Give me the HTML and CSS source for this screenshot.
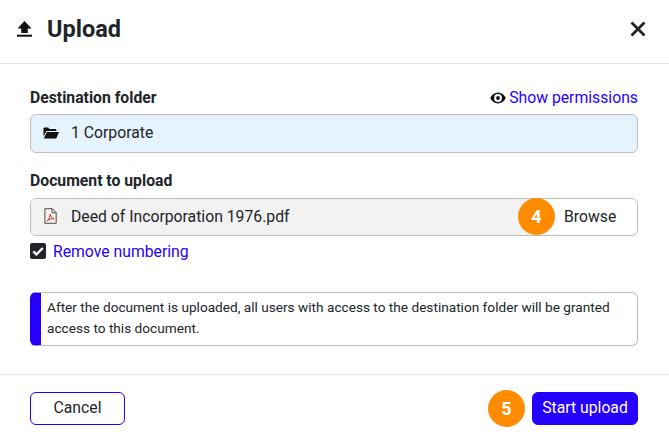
FILE: index.html
```html
<!DOCTYPE html>
<html lang="en">
<head>
    <meta charset="UTF-8">
    <meta name="viewport" content="width=device-width, initial-scale=1.0">
    <title>Upload</title>
    <link rel="stylesheet" href="styles.css">
</head>
<body>
    <div class="dialog">
        <div class="dialog-header">
            <svg class="upload-icon" viewBox="0 0 15 16" width="15" height="16">
                <path d="M7.5 0 L14.500 7.500 H10.800 V12 H4.200 V7.500 H.5 Z" fill="#111"/>
                <rect x="0" y="13.700" width="15" height="2" fill="#111"/>
            </svg>
            <h1>Upload</h1>
            <svg class="close-icon" viewBox="0 0 16 16" width="16" height="16">
                <path d="M1.500 1.500 L14.500 14.500 M14.500 1.500 L1.500 14.500" stroke="#222" stroke-width="2.800" fill="none"/>
            </svg>
        </div>

        <div class="dialog-body">
            <div class="label-row">
                <span class="field-label">Destination folder</span>
                <a class="permissions-link">
                    <svg class="eye-icon" viewBox="0 0 16 12" width="16" height="12">
                        <path fill-rule="evenodd" fill="#111" d="M8 .5C4.600.5 1.700 2.600.2 6c1.500 3.400 4.400 5.500 7.800 5.500s6.300-2.100 7.800-5.500C14.300 2.600 11.400.5 8 .5zM8 9.900A3.900 3.900 0 1 1 8 2.100a3.900 3.900 0 0 1 0 7.800z"/>
                        <circle cx="8" cy="6" r="1.900" fill="#111"/>
                    </svg>Show permissions
                </a>
            </div>
            <div class="field field-folder">
                <svg class="field-icon" viewBox="0 0 16 12" width="16" height="12">
                    <path fill="#111" d="M.5 1.200C.5.700.9.500 1.300.500h3.900l1.400 1.500h5.900c.5 0 .8.300.8.800V4H3.400L.5 9.500z"/>
                    <path fill="#111" d="M3.900 5H16l-2.600 6.200c-.2.300-.4.400-.8.400H.8z"/>
                </svg>
                <span>1 Corporate</span>
            </div>

            <div class="label-row label-row-doc">
                <span class="field-label">Document to upload</span>
            </div>
            <div class="field field-file">
                <div class="file-name">
                    <svg class="field-icon pdf-icon" viewBox="0 0 13 16" width="13" height="16">
                        <path fill="none" stroke="#5a4a42" stroke-width="1" d="M.9.700h7.400l3.900 3.900v10.700H.9z"/>
                        <path fill="none" stroke="#5a4a42" stroke-width="1" d="M8 .8v4h4"/>
                        <path fill="none" stroke="#c0392b" stroke-width="1" d="M2.800 13c2-1 3.500-4.500 3.400-7 .5 2.800 1.800 4.300 4 4.800-2.500-.2-5.200.6-7.400 2.200z"/>
                    </svg>
                    <span>Deed of Incorporation 1976.pdf</span>
                </div>
                <div class="browse">
                    <span class="step-badge step-badge-over">4</span>
                    Browse
                </div>
            </div>

            <label class="check-row">
                <span class="check-box">
                    <svg viewBox="0 0 16 16" width="16" height="16">
                        <path d="M3.300 8.300 L6.500 11.400 L12.800 5" stroke="#fff" stroke-width="2.300" fill="none"/>
                    </svg>
                </span>
                <a class="check-link">Remove numbering</a>
            </label>

            <div class="notice">
                After the document is uploaded, all users with access to the destination folder will be granted access to this document.
            </div>
        </div>

        <div class="dialog-footer">
            <button class="btn btn-cancel">Cancel</button>
            <div class="footer-right">
                <span class="step-badge">5</span>
                <button class="btn btn-primary">Start upload</button>
            </div>
        </div>
    </div>
</body>
</html>
```

FILE: styles.css
```css
* {
    box-sizing: border-box;
}
body {
    margin: 0;
    font-family: Roboto, Arial, sans-serif;
    background: #fff;
    color: #212529;
}
.dialog {
    width: 669px;
    height: 439px;
    overflow: hidden;
}
.dialog-header {
    height: 64px;
    display: flex;
    align-items: center;
    padding: 0 23px 5px 17px;
    border-bottom: 1px solid #e6e6e6;
}
.dialog-header h1 {
    flex: 1;
    margin: 0 0 0 15px;
    font-size: 23.5px;
    font-weight: 700;
    line-height: 30px;
}
.upload-icon {
    flex: none;
}
.dialog-body {
    height: 310px;
    padding: 20px 31px 0 30px;
}
.label-row {
    height: 30px;
    padding-bottom: 3px;
    display: flex;
    justify-content: space-between;
    align-items: center;
}
.label-row-doc {
    margin-top: 12px;
    height: 33px;
    padding-bottom: 2px;
}
.field-label {
    font-size: 15.75px;
    font-weight: 700;
}
.permissions-link {
    display: flex;
    align-items: center;
    gap: 3px;
    font-size: 15.75px;
    color: #2600ff;
}
.field {
    display: flex;
    align-items: center;
    border: 1px solid #bdbdbd;
    border-radius: 6px;
    font-size: 15.75px;
}
.field-folder {
    height: 39px;
    padding: 0 0 2px 12px;
    background: #e6f3fd;
}
.field-folder .field-icon {
    margin-right: 12px;
}
.field-file {
    height: 38px;
}
.file-name {
    flex: 1;
    height: 100%;
    display: flex;
    align-items: center;
    padding: 0 0 2px 13px;
    background: #f2f2f2;
    border-radius: 5px 0 0 5px;
}
.pdf-icon {
    margin-right: 14px;
}
.browse {
    position: relative;
    width: 96px;
    padding: 0 0 2px 23px;
}
.step-badge {
    display: flex;
    align-items: center;
    justify-content: center;
    width: 37px;
    height: 37px;
    border-radius: 50%;
    background: #ff8c00;
    color: #fff;
    font-size: 18px;
    font-weight: 700;
}
.step-badge-over {
    position: absolute;
    left: -23px;
    top: -9px;
}
.check-row {
    display: flex;
    align-items: center;
    gap: 7px;
    margin-top: 7px;
    height: 16px;
}
.check-box {
    width: 16px;
    height: 16px;
    border-radius: 2px;
    background: #212529;
    display: block;
}
.check-box svg {
    display: block;
}
.check-link {
    font-size: 15.75px;
    color: #2600ff;
}
.notice {
    margin-top: 33px;
    height: 54px;
    padding: 4px 4px 0 6px;
    border: 1px solid #bdbdbd;
    border-left: 11px solid #2600ff;
    border-radius: 6px;
    font-size: 13.65px;
    line-height: 21px;
}
.dialog-footer {
    height: 65px;
    display: flex;
    justify-content: space-between;
    align-items: center;
    padding: 3px 31px 0 30px;
    border-top: 1px solid #e6e6e6;
}
.footer-right {
    display: flex;
    align-items: center;
    gap: 7px;
}
.btn {
    height: 33px;
    border-radius: 6px;
    font-family: inherit;
    font-size: 15.75px;
    padding: 0 0 2px;
}
.btn-cancel {
    width: 95px;
    background: #fff;
    border: 1px solid #2600ff;
    color: #212529;
}
.btn-primary {
    width: 106px;
    background: #2600ff;
    border: 1px solid #2600ff;
    color: #fff;
}
```
